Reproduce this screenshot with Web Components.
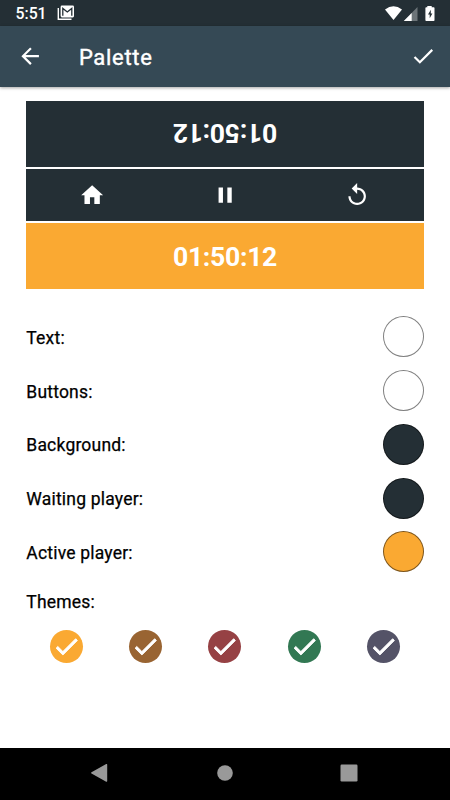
<!DOCTYPE html>
<html lang="en">
<head>
<meta charset="utf-8">
<title>Palette</title>
<style>
  body {
    margin: 0;
    font-family: Roboto, "Liberation Sans", sans-serif;
    background: #fff;
  }
</style>
</head>
<body>
<palette-app></palette-app>

<script>
const html = (markup) => {
  const template = document.createElement("template");
  template.innerHTML = markup;
  return template;
};

const define = (name, template, setup) => {
  window.customElements.define(name, class extends HTMLElement {
    constructor() {
      super();
      this.attachShadow({ mode: "open" });
      this.shadowRoot.appendChild(template.content.cloneNode(true));
    }
    connectedCallback() {
      if (setup) setup(this, this.shadowRoot);
    }
  });
};

const icons = {
  back: "M20 11H7.83l5.59-5.59L12 4l-8 8 8 8 1.41-1.41L7.83 13H20v-2z",
  check: "M9 16.17L4.83 12l-1.42 1.41L9 19 21 7l-1.41-1.41z",
  home: "M10 20v-6h4v6h5v-8h3L12 3 2 12h3v8z",
  pause: "M6 19h4V5H6v14zm8-14v14h4V5h-4z",
  replay: "M12 5V1L7 6l5 5V7c3.31 0 6 2.69 6 6s-2.69 6-6 6-6-2.69-6-6H4c0 4.42 3.58 8 8 8s8-3.58 8-8-3.58-8-8-8z"
};

define("ui-icon", html(`
<style>
:host {
  display: block;
  width: var(--icon-size, 26.3px);
  height: var(--icon-size, 26.3px);
}
svg {
  display: block;
  width: 100%;
  height: 100%;
  fill: currentColor;
  stroke: currentColor;
  stroke-width: var(--icon-stroke, 0);
}
</style>
<svg viewBox="0 0 24 24"><path /></svg>
`), (el, root) => {
  root.querySelector("path").setAttribute("d", icons[el.getAttribute("name")]);
});

define("status-bar", html(`
<style>
:host {
  display: flex;
  align-items: center;
  box-sizing: border-box;
  height: 26px;
  padding: 0 14px 0 15.5px;
  background: #242f35;
  color: #fff;
}
.time {
  font-size: 15.8px;
  font-weight: 500;
  line-height: 24px;
  padding-top: 2px;
}
svg {
  display: block;
}
.mail {
  margin-left: 10px;
}
.system {
  margin-left: auto;
}
</style>
<span class="time">5:51</span>
<svg class="mail" width="18" height="16" viewBox="0 0 18 16">
  <path d="M1.3 3v11.3H14.5" fill="none" stroke="#fff" stroke-width="1.4" />
  <rect x="3.6" y=".6" width="13.4" height="11.8" rx="1.3" fill="#fff" />
  <path d="M5.8 10.8V3.4l4.5 3.6 4.5-3.6v7.4" fill="none" stroke="#242f35" stroke-width="1.3" />
</svg>
<svg class="system" width="52" height="17" viewBox="0 0 52 17">
  <path d="M1 4.5Q9.5-2.2 18 4.5L9.5 15z" fill="#fff" />
  <path d="M33.5 2v14H19.8z" fill="#6c7478" />
  <path d="M27.7 8v8h-7.9z" fill="#fff" />
  <path d="M43.3 2.2V1h4.4v1.2h2c.5 0 .8.3.8.8v12.2c0 .5-.3.8-.8.8h-7.5c-.5 0-.8-.3-.8-.8V3c0-.5.3-.8.8-.8z" fill="#fff" />
  <path d="M46.8 4.8l-2.8 4.8h1.7v3.6l2.7-4.8h-1.6z" fill="#242f35" />
</svg>
`));

define("app-bar", html(`
<style>
:host {
  display: flex;
  align-items: center;
  box-sizing: border-box;
  height: 61px;
  padding: 0 13.7px 0 17.2px;
  background: #354955;
  color: #fff;
  box-shadow: 0 1px 3px rgba(0, 0, 0, .35);
}
h1 {
  flex: 1;
  margin: 3px 0 0 35.4px;
  font-size: 22px;
  font-weight: 400;
  line-height: 28px;
  letter-spacing: .7px;
  -webkit-text-stroke: .4px currentColor;
}
</style>
<ui-icon name="back"></ui-icon>
<h1><slot></slot></h1>
<ui-icon name="check"></ui-icon>
`));

define("player-clock", html(`
<style>
:host {
  display: flex;
  align-items: center;
  justify-content: center;
  height: 66px;
  background: #242f35;
  color: #fff;
  font-size: 26.6px;
  font-weight: 700;
  letter-spacing: -.3px;
}
:host([active]) {
  background: #faa932;
}
:host([flipped]) span {
  transform: rotate(180deg);
}
span {
  line-height: 30px;
  padding-top: 2px;
}
</style>
<span><slot></slot></span>
`));

define("clock-controls", html(`
<style>
:host {
  display: grid;
  grid-template-columns: repeat(3, 1fr);
  align-items: center;
  justify-items: center;
  height: 52px;
  background: #242f35;
  color: #fff;
}
</style>
<ui-icon name="home"></ui-icon>
<ui-icon name="pause"></ui-icon>
<ui-icon name="replay"></ui-icon>
`));

define("color-row", html(`
<style>
:host {
  display: flex;
  align-items: center;
  justify-content: space-between;
  height: 53.75px;
  font-size: 17.5px;
  letter-spacing: .2px;
  color: #000;
  -webkit-text-stroke: .25px currentColor;
}
span {
  padding-top: 2px;
}
i {
  box-sizing: border-box;
  width: 41px;
  height: 41px;
  border: 1px solid rgba(0, 0, 0, .5);
  border-radius: 50%;
}
</style>
<span><slot></slot></span>
<i></i>
`), (el, root) => {
  root.querySelector("i").style.background = el.getAttribute("color");
});

define("theme-dot", html(`
<style>
:host {
  display: grid;
  place-items: center;
  width: 33px;
  height: 33px;
  border-radius: 50%;
  color: #fff;
  --icon-size: 29px;
  --icon-stroke: .8px;
}
</style>
<ui-icon name="check"></ui-icon>
`), (el) => {
  el.style.background = el.getAttribute("color");
});

define("nav-bar", html(`
<style>
:host {
  display: grid;
  grid-template-columns: repeat(3, 124.5px);
  justify-content: center;
  align-items: center;
  justify-items: center;
  box-sizing: border-box;
  height: 52.5px;
  padding: 0 1px 1px 0;
  background: #000;
}
svg {
  display: block;
  fill: #999;
}
</style>
<svg width="18" height="18" viewBox="0 0 18 18"><path d="M.5 8.2L15.2.1q1-.4 1 .6v16.4q0 1-1 .6L.5 9.6q-.8-.7 0-1.4z" /></svg>
<svg width="18" height="18" viewBox="0 0 18 18"><circle cx="9" cy="9" r="7.8" /></svg>
<svg width="18" height="18" viewBox="0 0 18 18"><rect x=".5" y=".5" width="17" height="17" rx="1.2" /></svg>
`));

define("palette-app", html(`
<style>
:host {
  display: flex;
  flex-direction: column;
  height: 800px;
  overflow: hidden;
}
app-bar {
  flex: none;
}
main {
  flex: 1;
  padding: 14px 26.3px 0;
}
.preview {
  display: flex;
  flex-direction: column;
  gap: 2px;
}
.colors {
  margin-top: 21px;
}
h2 {
  margin: 13.5px 0 0;
  font-size: 17.5px;
  font-weight: 400;
  line-height: 20px;
  letter-spacing: .2px;
  color: #000;
  -webkit-text-stroke: .25px currentColor;
}
.themes {
  display: grid;
  grid-template-columns: repeat(5, 1fr);
  justify-items: center;
  margin-top: 17.5px;
}
</style>
<status-bar></status-bar>
<app-bar>Palette</app-bar>
<main>
  <div class="preview">
    <player-clock flipped>01:50:12</player-clock>
    <clock-controls></clock-controls>
    <player-clock active>01:50:12</player-clock>
  </div>
  <div class="colors">
    <color-row color="#fff">Text:</color-row>
    <color-row color="#fff">Buttons:</color-row>
    <color-row color="#242f35">Background:</color-row>
    <color-row color="#242f35">Waiting player:</color-row>
    <color-row color="#faa932">Active player:</color-row>
  </div>
  <h2>Themes:</h2>
  <div class="themes">
    <theme-dot color="#faa932"></theme-dot>
    <theme-dot color="#996432"></theme-dot>
    <theme-dot color="#964144"></theme-dot>
    <theme-dot color="#327853"></theme-dot>
    <theme-dot color="#545367"></theme-dot>
  </div>
</main>
<nav-bar></nav-bar>
`));
</script>
</body>
</html>
